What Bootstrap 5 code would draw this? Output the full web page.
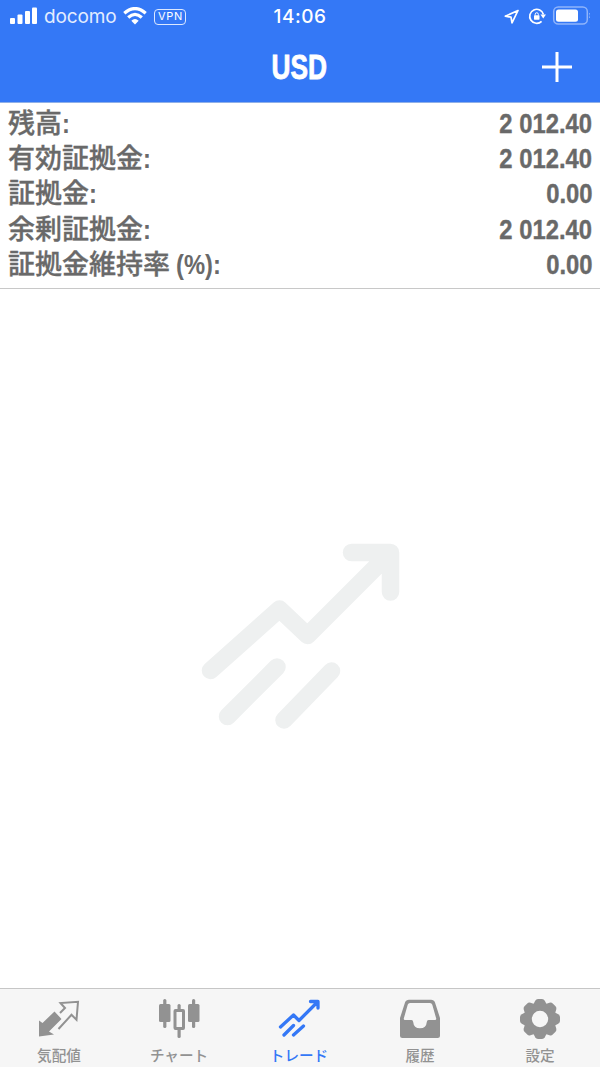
<!DOCTYPE html>
<html lang="ja">
<head>
<meta charset="utf-8">
<meta name="viewport" content="width=device-width, initial-scale=1">
<title>USD</title>
<link href="https://cdn.jsdelivr.net/npm/bootstrap@5.3.0/dist/css/bootstrap.min.css" rel="stylesheet">
<style>
body{font-family:"Liberation Sans","Noto Sans CJK JP",sans-serif;background:#fff}
.app-head{background:#3478f6;height:103px;border-bottom:1px solid #8fb0e8;color:#fff}
.status{height:32px;padding-top:1px;font-family:Inter,sans-serif;font-size:19px;line-height:32px}
.status>div{flex:1 1 0}
.status svg{margin-bottom:2px}
.status .sys-icons{margin:0 10px 1px 0}
.carrier{letter-spacing:-.15px;color:#e3edff;margin:0 7px 0 6px}
.clock{letter-spacing:.5px;font-weight:500}
.vpn{font-size:11px;line-height:13px;border:1.5px solid #dce8ff;border-radius:4px;width:32px;height:16px;letter-spacing:.6px;margin:0 0 0 7px}
.titlebar{height:70px}
.titlebar>div{flex:1 1 0}
.add-icon{margin-right:28px}
.cond{display:inline-block;font-weight:700;transform:scaleX(.85);transform-origin:right center;-webkit-text-stroke:.4px currentColor}
.title{font-size:35px;line-height:70px;padding-right:2px;-webkit-text-stroke:.9px #fff;transform:scaleX(.75);transform-origin:center}
.summary{padding:2px 8px 8px;height:186px;border-bottom:1px solid #c8c8c8;color:#696969}
.line{height:35.2px;line-height:35.2px}
.label-jp{font-family:"Noto Sans CJK JP",sans-serif;font-size:27px;font-weight:500;-webkit-text-stroke:.35px #696969;white-space:nowrap;margin-top:-1px}
.label-jp .cond{font-family:"Liberation Sans",sans-serif;-webkit-text-stroke:0;transform:scaleX(.88);transform-origin:left center}
.num{font-size:28px;padding-top:1px}
.chart-mark{margin-bottom:6px}
.tabs{height:79px;background:#f6f6f6;border-top:1px solid #c6c6c6;color:#929292}
.tab-item{width:20%;padding-top:9px;font-family:"Noto Sans CJK JP",sans-serif;font-size:14.6px;font-weight:500;line-height:22px}
.tab-item:nth-child(-n+3){padding-right:2px}
.tab-item svg{margin-bottom:4px}
.tab-item span{white-space:nowrap}
.tab-item.current{color:#3478f6}
</style>
</head>
<body>
<div class="d-flex flex-column vh-100 overflow-hidden">
<header class="app-head flex-shrink-0">
  <div class="status d-flex align-items-center">
    <div class="d-flex align-items-center">
      <svg class="ms-2" width="30" height="20" viewBox="8 6 30 20" fill="#fff"><rect x="10" y="18" width="5" height="6" rx="1"/><rect x="17.5" y="14.5" width="5" height="9.5" rx="1"/><rect x="25" y="11" width="5" height="13" rx="1"/><rect x="32" y="7.500" width="5" height="16.500" rx="1"/></svg>
      <span class="carrier">docomo</span>
      <svg width="24" height="18" viewBox="0 0 24 18" fill="none" stroke="#fff" stroke-width="3.200"><path d="M1.300 6.300Q12-3.200 22.700 6.300M5.200 10.500Q12 4.300 18.800 10.500"/><path fill="#fff" stroke="none" d="M8.300 13.700Q12 10.300 15.700 13.700L12 17.500z"/></svg>
      <span class="vpn d-inline-block text-center">VPN</span>
    </div>
    <div class="clock flex-grow-0 text-nowrap">14:06</div>
    <div class="d-flex justify-content-end align-items-center">
      <svg class="sys-icons" width="92" height="24" viewBox="498 4 92 24" fill="none" stroke="#fff"><path stroke-width="1.700" stroke-linejoin="round" d="M518 10.500L505.300 16.200L511 17.200L512 22.800Z"/><path stroke-width="1.700" d="M541.600 21.300A7 7 0 1 1 543.500 14.500"/><path fill="#fff" stroke="none" d="M540.500 14.500h5.500l-2.800 4z"/><rect x="534" y="15.200" width="5.500" height="4.500" rx=".6" fill="#fff" stroke="none"/><path d="M535.200 15.500v-1.200a1.550 1.550 0 0 1 3.100 0v1.200"/><rect x="553.700" y="7" width="33.600" height="17" rx="4.500" stroke="#8fb4fb" stroke-width="1.500"/><rect x="556" y="9.500" width="22" height="12.200" rx="2.500" fill="#fff" stroke="none"/><path d="M589.500 13q1.500 2.500 0 5" stroke="#8fb4fb"/></svg>
    </div>
  </div>
  <div class="titlebar d-flex align-items-center">
    <div></div>
    <div class="title cond flex-grow-0">USD</div>
    <div class="text-end"><svg class="add-icon" width="30" height="30" viewBox="0 0 30 30" stroke="#fff" stroke-width="3"><path d="M0 15h30M15 0v30"/></svg></div>
  </div>
</header>
<section class="summary flex-shrink-0">
  <div class="line d-flex justify-content-between"><span class="label-jp">残高<b class="cond">:</b></span><span class="num cond">2 012.40</span></div>
  <div class="line d-flex justify-content-between"><span class="label-jp">有効証拠金<b class="cond">:</b></span><span class="num cond">2 012.40</span></div>
  <div class="line d-flex justify-content-between"><span class="label-jp">証拠金<b class="cond">:</b></span><span class="num cond">0.00</span></div>
  <div class="line d-flex justify-content-between"><span class="label-jp">余剰証拠金<b class="cond">:</b></span><span class="num cond">2 012.40</span></div>
  <div class="line d-flex justify-content-between"><span class="label-jp">証拠金維持率 <b class="cond">(%):</b></span><span class="num cond">0.00</span></div>
</section>
<main class="flex-grow-1 d-flex justify-content-center align-items-center">
  <svg class="chart-mark" width="200" height="188" viewBox="200 542 200 188" fill="none" stroke="#eef0f0" stroke-width="17.500" stroke-linecap="round" stroke-linejoin="round"><path d="M210.500 670.500L279.500 609L307.500 635.500L388 555M351.500 552.500H390.500V592M227.500 716.500L277 667M284 720L331.500 671"/></svg>
</main>
<nav class="tabs d-flex flex-shrink-0">
  <div class="tab-item d-flex flex-column align-items-center">
    <svg width="42" height="42" viewBox="38 998 42 42"><path fill="#929292" d="M39 1020.500l3.500 2.500L54.500 1011.500l7 7.500L49 1031.500l5 3L39 1036.500z"/><path fill="none" stroke="#929292" stroke-width="2" d="M60 1013l5-5-4.500-5 17.500-1.200-1.500 18-5-5L58.500 1029"/></svg>
    <span>気配値</span>
  </div>
  <div class="tab-item d-flex flex-column align-items-center">
    <svg width="42" height="42" viewBox="158 998 42 42" fill="#929292"><rect x="163.200" y="999" width="3.200" height="29" rx="1.500"/><rect x="159" y="1004" width="11.500" height="18" rx="1.500"/><rect x="192" y="999" width="3.200" height="29" rx="1.500"/><rect x="188" y="1004" width="11.500" height="18" rx="1.500"/><rect x="177.500" y="1004" width="3.200" height="7" rx="1.500"/><rect x="177.500" y="1028" width="3.200" height="10" rx="1.500"/><rect x="175" y="1010.500" width="8.500" height="18" rx=".5" fill="none" stroke="#929292" stroke-width="3"/></svg>
    <span>チャート</span>
  </div>
  <div class="tab-item current d-flex flex-column align-items-center">
    <svg width="42" height="42" viewBox="278 998 42 42" fill="none" stroke="#3478f6" stroke-width="3.300" stroke-linecap="round" stroke-linejoin="round"><path d="M280.500 1027L293.500 1015L299 1020.500L316.500 1003M310.500 1001.500H318V1008M284 1035L293.500 1025.500M293.500 1035L303.500 1026"/></svg>
    <span>トレード</span>
  </div>
  <div class="tab-item d-flex flex-column align-items-center">
    <svg width="42" height="42" viewBox="399 998 42 42"><path fill="#929292" fill-rule="evenodd" d="M409 999.700H431Q434 999.700 435 1002.500L440 1018V1035.500Q440 1038 437.500 1038H402.500Q400 1038 400 1035.500V1018L405 1002.500Q406 999.700 409 999.700ZM410 1003Q408.300 1003 407.700 1004.700L403.800 1018.500Q403.500 1020 405 1020H411.500Q413 1020 413.200 1022Q413.700 1028.300 420 1028.300T426.800 1022Q427 1020 428.500 1020H435Q436.500 1020 436.200 1018.500L432.300 1004.700Q431.700 1003 430 1003Z"/></svg>
    <span>履歴</span>
  </div>
  <div class="tab-item d-flex flex-column align-items-center">
    <svg width="42" height="42" viewBox="-21 -21 42 42" fill="#929292"><defs><path id="tooth" d="M-7-14L-4.800-18.200Q-3.800-20-2-20H2Q3.800-20 4.800-18.200L7-14z"/></defs><circle r="12.200" fill="none" stroke="#929292" stroke-width="8"/><use href="#tooth"/><use href="#tooth" transform="rotate(45)"/><use href="#tooth" transform="rotate(90)"/><use href="#tooth" transform="rotate(135)"/><use href="#tooth" transform="rotate(180)"/><use href="#tooth" transform="rotate(225)"/><use href="#tooth" transform="rotate(270)"/><use href="#tooth" transform="rotate(315)"/></svg>
    <span>設定</span>
  </div>
</nav>
</div>
<script src="https://cdn.jsdelivr.net/npm/bootstrap@5.3.0/dist/js/bootstrap.bundle.min.js"></script>
</body>
</html>
